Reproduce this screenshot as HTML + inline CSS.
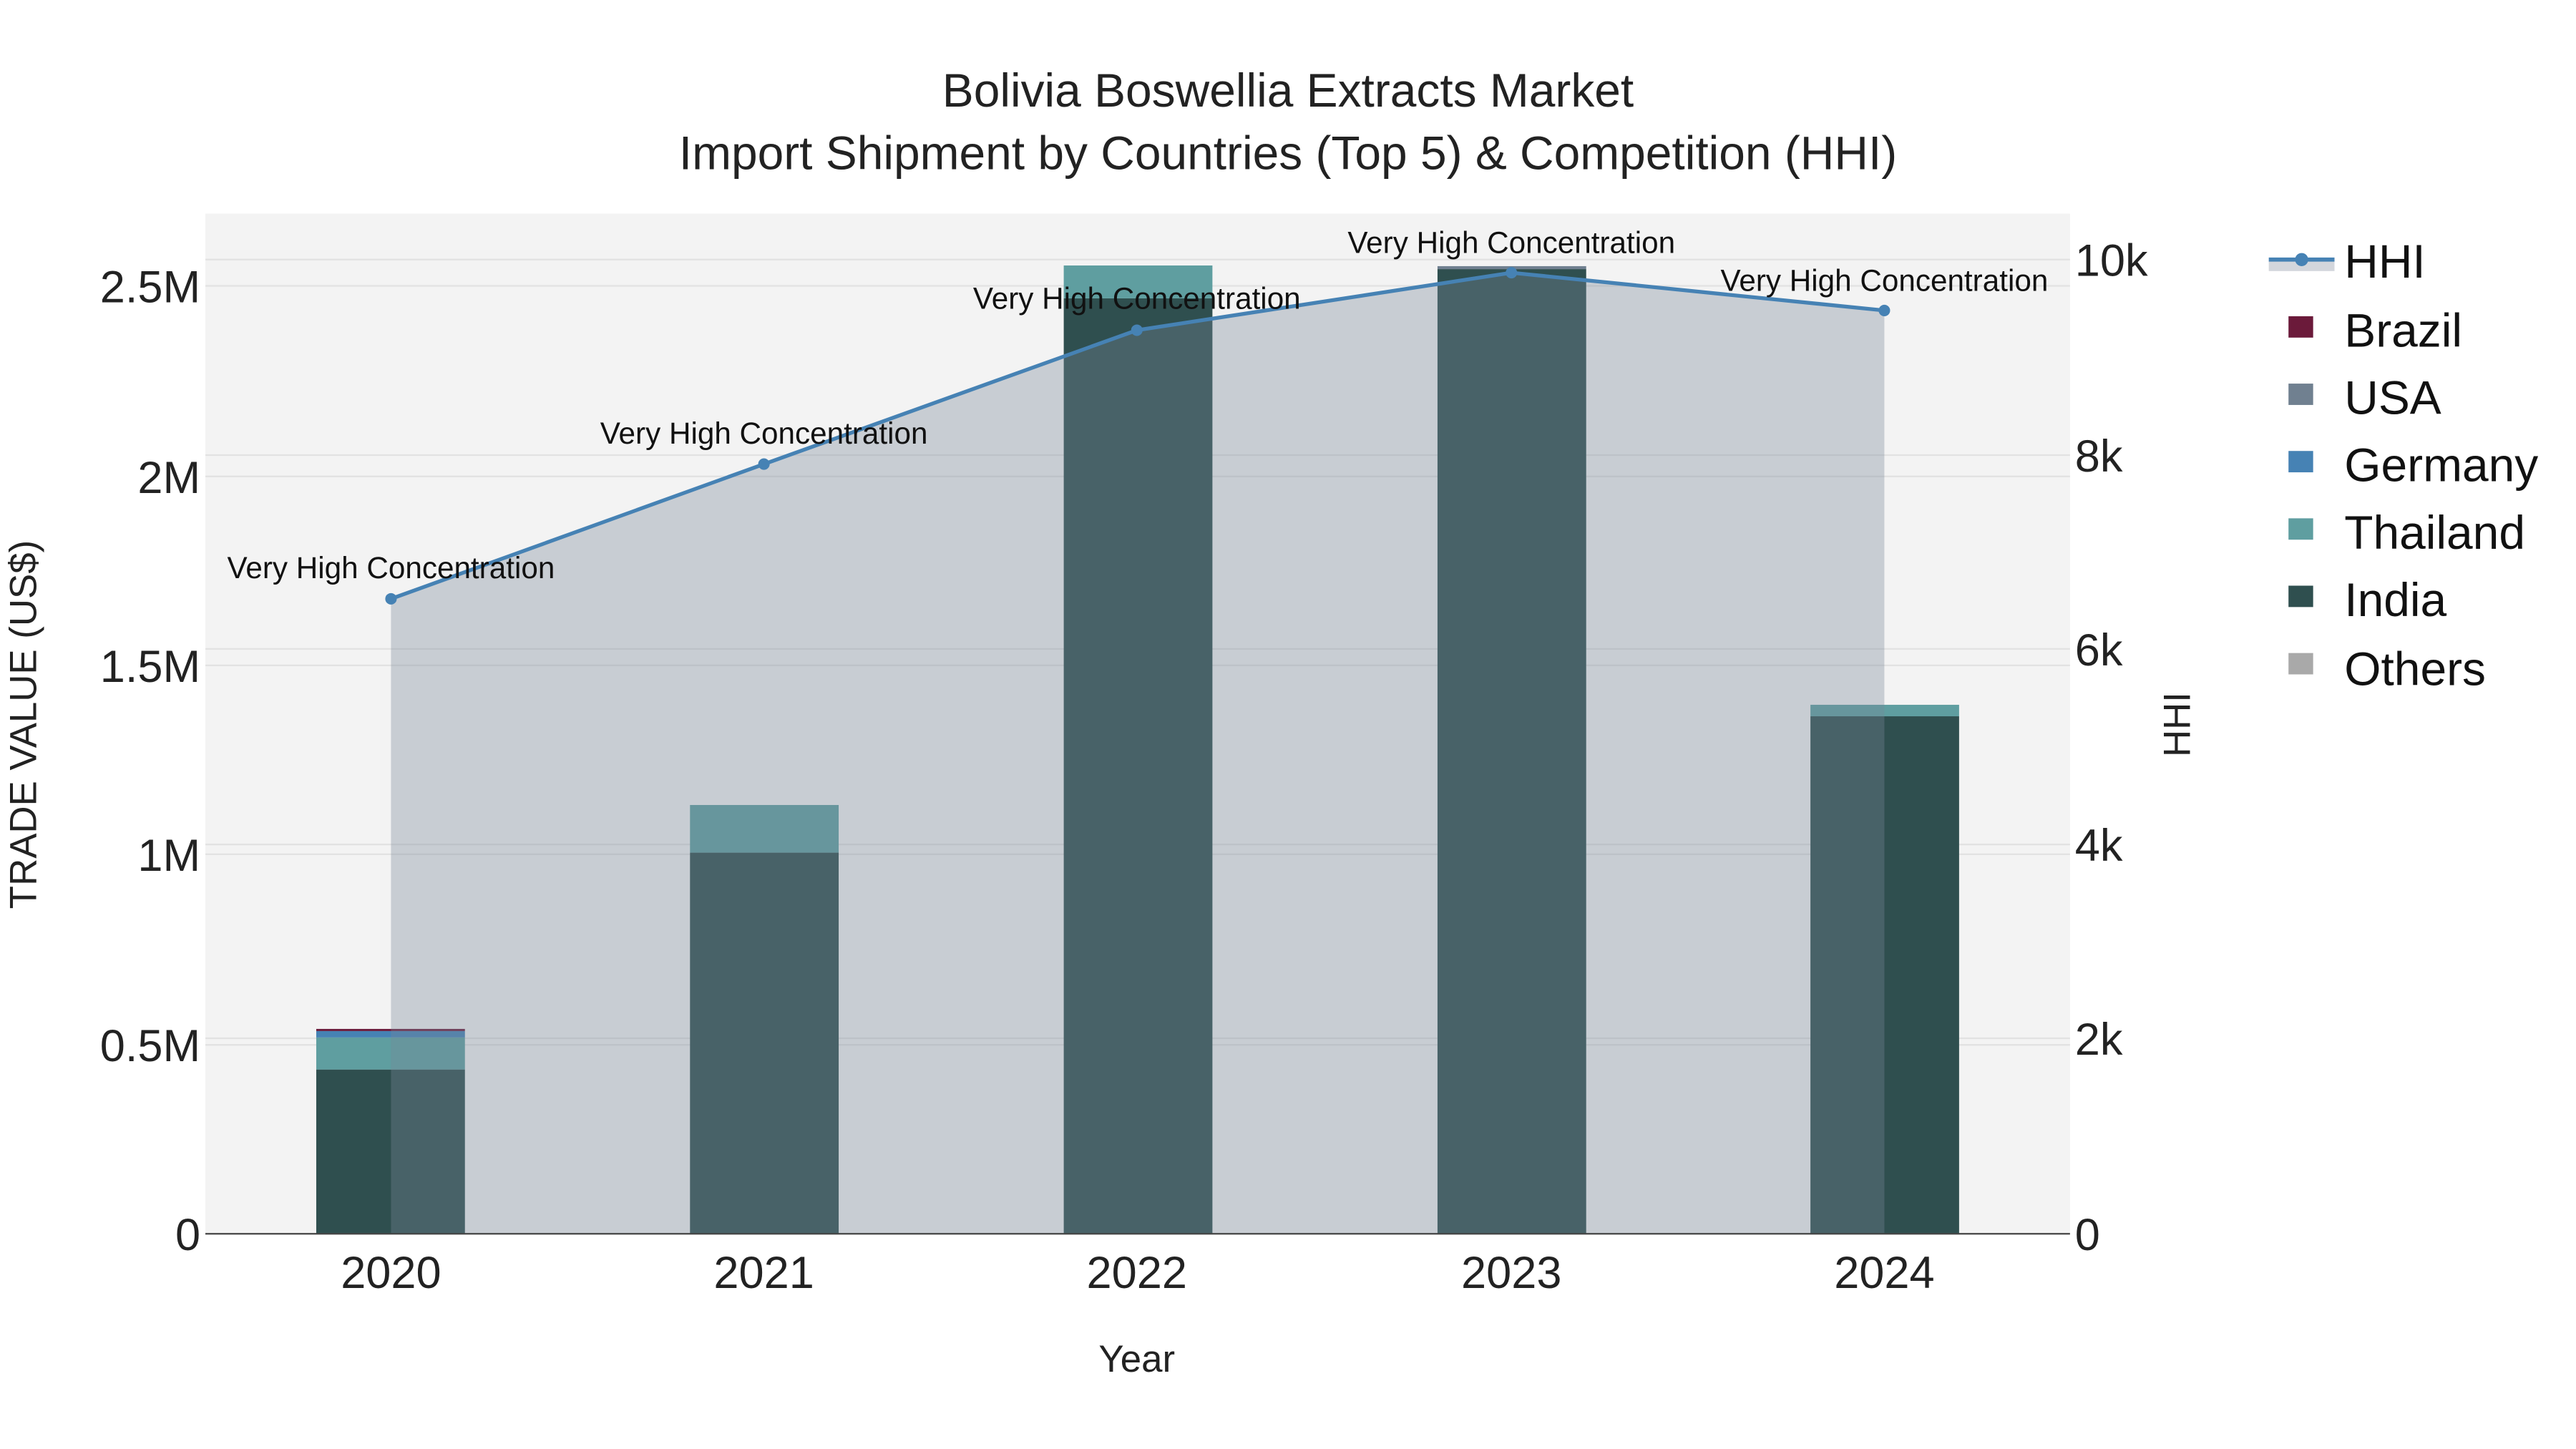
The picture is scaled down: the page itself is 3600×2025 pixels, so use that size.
<!DOCTYPE html>
<html><head><meta charset="utf-8"><style>html,body{margin:0;padding:0;background:#fff}svg{display:block}</style></head>
<body>
<svg width="3600" height="2025" viewBox="0 0 1568 882" xmlns="http://www.w3.org/2000/svg" font-family="Liberation Sans, sans-serif">
<rect width="1568" height="882" fill="#fff"/>
<rect x="125" y="130" width="1135" height="621" fill="#f3f3f3"/>
<g stroke="#e2e2e2" stroke-width="1">
<line x1="125" x2="1260" y1="174" y2="174"/><line x1="125" x2="1260" y1="290" y2="290"/>
<line x1="125" x2="1260" y1="405" y2="405"/><line x1="125" x2="1260" y1="520" y2="520"/>
<line x1="125" x2="1260" y1="636" y2="636"/>
<line x1="125" x2="1260" y1="158" y2="158"/><line x1="125" x2="1260" y1="277" y2="277"/>
<line x1="125" x2="1260" y1="395" y2="395"/><line x1="125" x2="1260" y1="514" y2="514"/>
<line x1="125" x2="1260" y1="632" y2="632"/>
</g>
<rect x="192.5" y="651" width="90.5" height="100" fill="#2F4F4F"/>
<rect x="192.5" y="631.5" width="90.5" height="19.5" fill="#5F9EA0"/>
<rect x="192.5" y="627.6" width="90.5" height="3.9" fill="#4682B4"/>
<rect x="192.5" y="626.3" width="90.5" height="1.3" fill="#6B1A3A"/>
<rect x="420" y="519" width="90.5" height="232" fill="#2F4F4F"/>
<rect x="420" y="490" width="90.5" height="29" fill="#5F9EA0"/>
<rect x="647.5" y="181.6" width="90.5" height="569.4" fill="#2F4F4F"/>
<rect x="647.5" y="161.6" width="90.5" height="20" fill="#5F9EA0"/>
<rect x="875" y="163.8" width="90.5" height="587.2" fill="#2F4F4F"/>
<rect x="875" y="162" width="90.5" height="1.8" fill="#708090"/>
<rect x="1102" y="436" width="90.5" height="315" fill="#2F4F4F"/>
<rect x="1102" y="429" width="90.5" height="7" fill="#5F9EA0"/>
<polygon points="238,751 238,364.5 465,282.5 692,201 920,166 1147,189 1147,751" fill="rgba(119,136,153,0.35)"/>
<line x1="125" x2="1260" y1="751" y2="751" stroke="#444" stroke-width="1"/>
<polyline points="238,364.5 465,282.5 692,201 920,166 1147,189" fill="none" stroke="#4682B4" stroke-width="2.3"/>
<g fill="#4682B4"><circle cx="238" cy="364.5" r="3.5"/><circle cx="465" cy="282.5" r="3.5"/><circle cx="692" cy="201" r="3.5"/><circle cx="920" cy="166" r="3.5"/><circle cx="1147" cy="189" r="3.5"/></g>
<g font-size="18.4" fill="#111" text-anchor="middle">
<text x="238" y="352">Very High Concentration</text>
<text x="465" y="270">Very High Concentration</text>
<text x="692" y="188">Very High Concentration</text>
<text x="920" y="154">Very High Concentration</text>
<text x="1147" y="177">Very High Concentration</text>
</g>
<g font-size="27.5" fill="#222" text-anchor="end">
<text x="122" y="184">2.5M</text><text x="122" y="300">2M</text><text x="122" y="415">1.5M</text>
<text x="122" y="530">1M</text><text x="122" y="646">0.5M</text><text x="122" y="761">0</text>
</g>
<g font-size="27.5" fill="#222" text-anchor="start">
<text x="1263" y="168">10k</text><text x="1263" y="287">8k</text><text x="1263" y="405">6k</text>
<text x="1263" y="524">4k</text><text x="1263" y="642">2k</text><text x="1263" y="761">0</text>
</g>
<g font-size="27.5" fill="#222" text-anchor="middle">
<text x="238" y="784">2020</text><text x="465" y="784">2021</text><text x="692" y="784">2022</text><text x="920" y="784">2023</text><text x="1147" y="784">2024</text>
</g>
<text x="692" y="835" font-size="23" fill="#222" text-anchor="middle">Year</text>
<text transform="translate(22,441) rotate(-90)" font-size="23" fill="#222" text-anchor="middle">TRADE VALUE (US$)</text>
<text transform="translate(1333,441) rotate(-90)" font-size="23" fill="#222" text-anchor="middle">HHI</text>
<g font-size="28.7" fill="#222" text-anchor="middle">
<text x="784" y="65">Bolivia Boswellia Extracts Market</text>
<text x="784" y="103">Import Shipment by Countries (Top 5) &amp; Competition (HHI)</text>
</g>
<rect x="1381" y="159" width="40" height="6" fill="#d3d6dc"/>
<line x1="1381" x2="1421" y1="158" y2="158" stroke="#4682B4" stroke-width="2.5"/>
<circle cx="1401" cy="158" r="4" fill="#4682B4"/>
<rect x="1393" y="192.5" width="15" height="13" fill="#6B1A3A"/>
<rect x="1393" y="233.5" width="15" height="13" fill="#708090"/>
<rect x="1393" y="274.5" width="15" height="13" fill="#4682B4"/>
<rect x="1393" y="315.5" width="15" height="13" fill="#5F9EA0"/>
<rect x="1393" y="356.5" width="15" height="13" fill="#2F4F4F"/>
<rect x="1393" y="397.5" width="15" height="13" fill="#A9A9A9"/>
<g font-size="28.7" fill="#111">
<text x="1427" y="169">HHI</text><text x="1427" y="211">Brazil</text><text x="1427" y="252">USA</text>
<text x="1427" y="293">Germany</text><text x="1427" y="334">Thailand</text><text x="1427" y="375">India</text><text x="1427" y="417">Others</text>
</g>
</svg>
</body></html>
